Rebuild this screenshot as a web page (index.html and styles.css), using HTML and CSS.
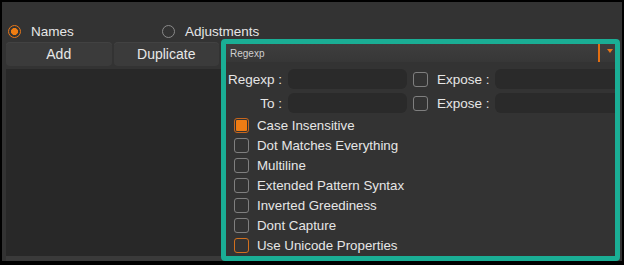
FILE: index.html
```html
<!DOCTYPE html>
<html>
<head>
<meta charset="utf-8">
<link rel="stylesheet" href="styles.css">
</head>
<body>
<div class="window">
  <div class="radios">
    <label class="radio on"><span class="dot"></span>Names</label>
    <label class="radio"><span class="dot"></span>Adjustments</label>
  </div>
  <div class="main">
    <div class="left">
      <div class="buttons">
        <div class="btn">Add</div>
        <div class="btn">Duplicate</div>
      </div>
      <div class="list"></div>
    </div>
    <div class="editor">
      <div class="dropdown">
        <span class="dd-text">Regexp</span>
        <span class="dd-line"></span>
        <span class="dd-caret"></span>
      </div>
      <div class="fields">
        <div class="row">
          <span class="lbl">Regexp :</span>
          <span class="field"></span>
          <span class="cb gap"></span>
          <span class="lbl2">Expose :</span>
          <span class="field2"></span>
        </div>
        <div class="row">
          <span class="lbl">To :</span>
          <span class="field"></span>
          <span class="cb gap"></span>
          <span class="lbl2">Expose :</span>
          <span class="field2"></span>
        </div>
      </div>
      <ul class="opts">
        <li><span class="cb checked"></span>Case Insensitive</li>
        <li><span class="cb"></span>Dot Matches Everything</li>
        <li><span class="cb"></span>Multiline</li>
        <li><span class="cb"></span>Extended Pattern Syntax</li>
        <li><span class="cb"></span>Inverted Greediness</li>
        <li><span class="cb"></span>Dont Capture</li>
        <li><span class="cb focus"></span>Use Unicode Properties</li>
      </ul>
    </div>
  </div>
</div>
</body>
</html>
```
FILE: styles.css
```css
html, body {
  margin: 0;
  padding: 0;
}
body {
  background: #000;
  width: 624px;
  height: 265px;
  overflow: hidden;
  font-family: "Liberation Sans", Arial, sans-serif;
  color: #e6e6e6;
}
.window {
  margin: 2px;
  width: 620px;
  height: 259px;
  background: #333333;
  box-sizing: border-box;
  padding: 19px 2px 0 4px;
  display: flex;
  flex-direction: column;
}
.radios {
  display: flex;
  align-items: center;
  height: 20px;
  padding-left: 2px;
  margin-bottom: -2px;
  font-size: 13.5px;
}
.radio {
  display: flex;
  align-items: center;
  gap: 10px;
}
.radio:first-child {
  width: 154px;
}
.dot {
  width: 13px;
  height: 13px;
  border-radius: 50%;
  border: 1px solid #8a8a8a;
  box-sizing: border-box;
}
.radio.on .dot {
  border-color: #e5761a;
  background: radial-gradient(circle, #f07d12 0 3.2px, transparent 3.8px);
}
.main {
  display: flex;
  flex: 1;
  min-height: 0;
}
.left {
  width: 215px;
  display: flex;
  flex-direction: column;
  padding-top: 3px;
}
.buttons {
  display: flex;
  gap: 2px;
  height: 24px;
  padding-right: 2px;
}
.btn {
  flex: 1;
  background: #3b3b3b;
  border-radius: 4px;
  display: flex;
  align-items: center;
  justify-content: center;
  font-size: 14px;
  color: #e8e8e8;
  box-shadow: inset 0 1px 0 #424242;
}
.list {
  margin-top: 3px;
  flex: 1;
  background: #282828;
  border-bottom: 5px solid #3a3a3a;
}
.editor {
  width: 399px;
  border: 5px solid #1aae95;
  border-radius: 4px;
  background: #333333;
  box-sizing: border-box;
  display: flex;
  flex-direction: column;
  overflow: hidden;
}
.dropdown {
  height: 18px;
  flex: none;
  display: flex;
  align-items: center;
  background: linear-gradient(#3e3e3e, #373737);
  padding-left: 4px;
}
.dd-text {
  font-size: 10px;
  color: #cfcfcf;
}
.dd-line {
  margin-left: auto;
  width: 2px;
  height: 100%;
  background: #e36f12;
}
.dd-caret {
  width: 0;
  height: 0;
  border-left: 3px solid transparent;
  border-right: 3px solid transparent;
  border-top: 4px solid #e8761a;
  margin: 0 2px 4px 7px;
}
.fields {
  padding-top: 7px;
  display: flex;
  flex-direction: column;
  gap: 4px;
}
.row {
  display: flex;
  align-items: center;
  height: 20px;
}
.lbl {
  width: 56px;
  text-align: right;
  font-size: 13.5px;
  flex: none;
}
.lbl2 {
  margin-left: 9px;
  width: 50px;
  font-size: 13.5px;
  white-space: nowrap;
  flex: none;
}
.field {
  margin-left: 6px;
  width: 119px;
  height: 20px;
  border-radius: 6px;
  background: #2a2a2a;
  flex: none;
}
.field2 {
  margin-left: 8px;
  flex: 1;
  height: 20px;
  border-radius: 6px 0 0 6px;
  background: #2a2a2a;
}
.cb {
  width: 15px;
  height: 15px;
  border: 1px solid #7f7f7f;
  border-radius: 3px;
  box-sizing: border-box;
  flex: none;
}
.cb.gap {
  margin-left: 6px;
}
.cb.checked {
  border-color: #c9661c;
  padding: 1px;
  background: #ef7c14;
  background-clip: content-box;
}
.cb.focus {
  border-color: #d2701e;
}
.opts {
  list-style: none;
  margin: 0;
  padding: 2px 0 0 8px;
  font-size: 13.3px;
}
.opts li {
  height: 20px;
  display: flex;
  align-items: center;
  gap: 8px;
}
```
